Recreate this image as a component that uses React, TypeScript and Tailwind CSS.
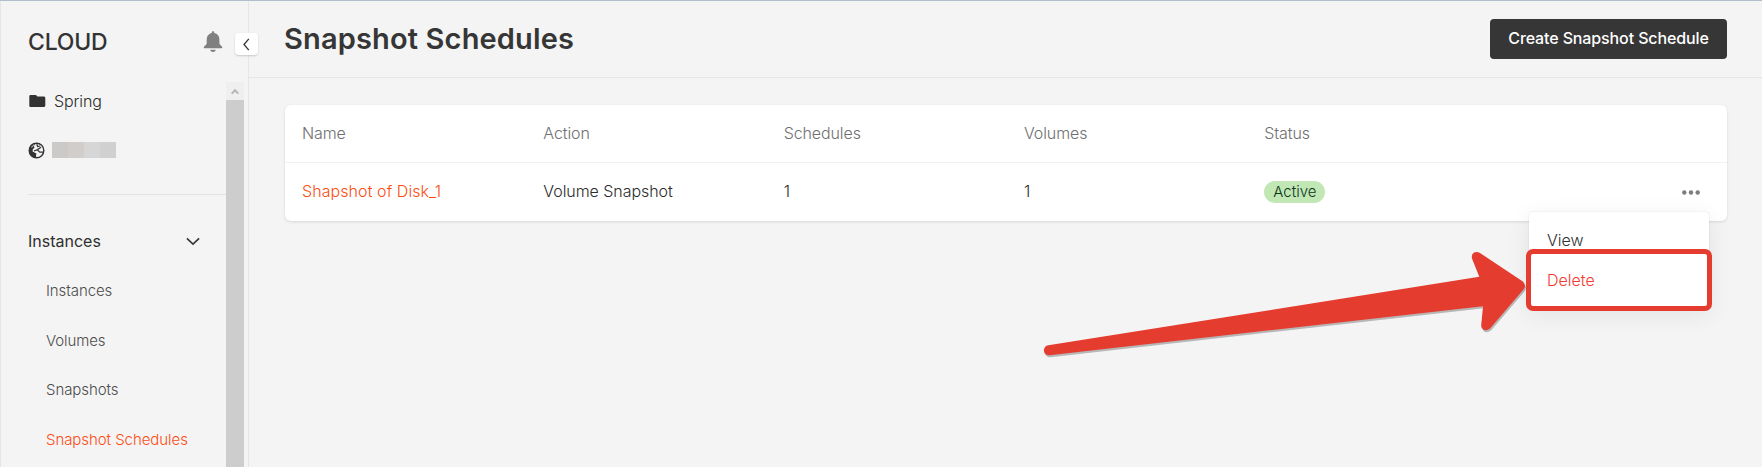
import React from "react";

const columns = ["Name", "Action", "Schedules", "Volumes", "Status", ""];
const links = ["Instances", "Volumes", "Snapshots", "Snapshot Schedules"];

function Sidebar() {
  return (
    <aside className="flex w-[249px] shrink-0 flex-col border-x border-[#e6e6e6]">
      <div className="flex h-[81px] items-center pt-[3px] pl-[27px]">
        <span className="w-[175px] text-[23px] leading-7 font-medium tracking-[-0.2px] text-[#333]">CLOUD</span>
        <svg width="20" height="22" viewBox="0 0 20 22" fill="#808080">
          <path d="M10 .2c.8 0 1.200.5 1.200 1.300v.6c3.300.6 5.200 3 5.200 6.400v3.600c0 1.200.8 2 2 2.800.7.5.9.9.9 1.600 0 .5-.3.800-.9.800H1.700c-.6 0-.9-.3-.9-.8 0-.7.2-1.100.9-1.600 1.200-.8 2-1.600 2-2.800V8.500c0-3.400 1.900-5.800 5.100-6.400v-.6C8.800.7 9.200.2 10 .2z" />
          <path d="M7.300 18.800h5.400c-.2 1.300-1.200 2.300-2.700 2.300s-2.500-1-2.700-2.300z" />
        </svg>
      </div>
      <div className="flex min-h-0 flex-1">
        <div className="flex w-[225px] flex-col pl-[27px]">
          <div className="flex h-[40px] items-center gap-[8px] pl-[1px] text-[#2b2b2b]">
            <svg width="17" height="14" viewBox="0 0 17 14" fill="#333">
              <path d="M1.500 1h4.900c.5 0 .8.200 1.100.5l.9 1h6.400c.8 0 1.500.7 1.500 1.500v7.500c0 .8-.7 1.500-1.500 1.500H1.500C.7 13 .3 12.300.3 11.500v-9C.3 1.700.7 1 1.500 1z" />
            </svg>
            <span className="text-[16px] font-[340] tracking-[-0.1px]">Spring</span>
          </div>
          <div className="mt-[9px] flex h-[40px] items-center gap-[7px]">
            <svg width="17" height="17" viewBox="0 0 17 17">
              <circle cx="8.500" cy="8.500" r="7.300" fill="none" stroke="#333" strokeWidth="1.400" />
              <path d="M3.500 3 5.500 1.800 7 2.600 5.700 4.300 6.600 5.400 4.800 7.200 4.600 9.500 6.500 10.500 8.600 11.800 8 13 8.300 15.500C4.200 15.600 1.400 13 1.300 8.500 1.200 6 2.200 4 3.500 3z" fill="#333" />
              <path d="M6 9 9.500 7.600 13 5.200M9.200 7.800l2.600 2.300 3.200.1M8.800 2.300l.8 2.200 2.500-.5" fill="none" stroke="#333" strokeWidth="1.200" />
              <path d="M3.300 5 4.800 4.500M4.800 3.400 6 3" stroke="#f4f4f4" strokeWidth=".9" />
            </svg>
            <div className="flex h-4">
              <i className="w-4 bg-[#cbcac9]" />
              <i className="w-4 bg-[#d0cdca]" />
              <i className="w-4 bg-[#d6d6d6]" />
              <i className="w-4 bg-[#d0d0d0]" />
            </div>
          </div>
          <div className="mt-[24px] h-px shrink-0 bg-[#e3e3e3]" />
          <div className="mt-[26px] flex h-10 shrink-0 items-center justify-between pr-[26px]">
            <span className="text-[16px] text-[#2f2f2f]">Instances</span>
            <svg width="14" height="9" viewBox="0 0 14 9" fill="none" stroke="#363636" strokeWidth="1.600">
              <path d="M.9 1.300 7 7.200l6.100-5.900" />
            </svg>
          </div>
          <nav className="flex flex-col pt-[5px] pl-[18px]">
            {links.map((l) => (
              <a
                key={l}
                className={
                  l === "Snapshot Schedules"
                    ? "flex h-[49.700px] shrink-0 items-center text-[15px] font-[340] tracking-[-0.06px] whitespace-nowrap text-[#fc4c14]"
                    : "flex h-[49.700px] shrink-0 items-center text-[15px] font-[340] tracking-[-0.08px] whitespace-nowrap text-[#4c4c4c]"
                }
              >
                {l}
              </a>
            ))}
          </nav>
        </div>
        <div className="mt-[1px] w-[18px] bg-[#cdcdcd]">
          <div className="flex h-[18px] items-center justify-center bg-[#efefef]">
            <svg width="8" height="7" viewBox="0 0 8 7" fill="none" stroke="#b5b5b5" strokeWidth="2">
              <path d="M.7 5.600 4 2.200l3.300 3.400" />
            </svg>
          </div>
        </div>
      </div>
    </aside>
  );
}

export default function App() {
  return (
    <div className="relative flex h-[467px] w-[1762px] overflow-hidden bg-[#f4f4f4] font-['Inter',sans-serif] leading-6">
      <Sidebar />
      <main className="flex min-w-0 flex-1 flex-col">
        <header className="flex h-[78px] items-center justify-between border-b border-[#e6e6e6] pr-[35px] pl-[35px]">
          <h1 className="text-[29px] leading-9 font-[590] tracking-[0.15px] text-[#363636]">Snapshot Schedules</h1>
          <button className="h-10 w-[237px] rounded bg-[#363636] pb-[2px] text-[16px] font-medium tracking-[-0.12px] whitespace-nowrap text-white">
            Create Snapshot Schedule
          </button>
        </header>
        <section className="mt-[27px] mr-[35px] ml-[36px] rounded-md bg-white text-[16px] font-[340] tracking-[-0.1px] shadow-[0_1px_3px_rgba(0,0,0,0.12)]">
          <div className="grid h-[58px] grid-cols-6 items-center border-b border-[#f1f1f1] pb-[2px] text-[#707070]">
            {columns.map((c, i) => (
              <span key={i} className={i === 0 ? "pl-[17px]" : "pl-[18px]"}>{c}</span>
            ))}
          </div>
          <div className="grid h-[58px] grid-cols-6 items-center text-[#2b2b2b]">
            <a className="pb-[2px] pl-[17px] tracking-[0.08px] text-[#fc4c14]">Shapshot of Disk_1</a>
            <span className="pb-[2px] pl-[18px] tracking-[-0.06px]">Volume Snapshot</span>
            <span className="pb-[2px] pl-[18px]">1</span>
            <span className="pb-[2px] pl-[18px]">1</span>
            <span className="flex pl-[18px]">
              <span className="flex h-[22px] w-[61px] items-center justify-center rounded-full bg-[#c0e7b4] text-[15px] tracking-[0px] text-[#0d3319]">
                Active
              </span>
            </span>
            <span className="flex justify-end pr-[27px]">
              <svg width="18" height="5" viewBox="0 0 18 5" fill="#7d7d7d">
                <circle cx="2.300" cy="2.500" r="2.200" />
                <circle cx="9" cy="2.500" r="2.200" />
                <circle cx="15.700" cy="2.500" r="2.200" />
              </svg>
            </span>
          </div>
        </section>
      </main>

      <div className="absolute top-0 left-0 h-px w-full bg-[#b0bdca]" />
      <button className="absolute top-[33px] left-[235px] flex h-[22px] w-[23px] items-center justify-center rounded bg-white shadow-[0_1px_2px_rgba(0,0,0,0.18)]">
        <svg width="7" height="13" viewBox="0 0 7 13" fill="none" stroke="#333" strokeWidth="1.300">
          <path d="M5.800.8 1 6.500l4.800 5.700" />
        </svg>
      </button>

      <div className="absolute top-[212px] left-[1529px] flex h-[96px] w-[180px] flex-col rounded bg-white pt-2 pl-[18px] text-[16px] font-[340] shadow-[0_6px_24px_rgba(0,0,0,0.08),0_0_2px_rgba(0,0,0,0.12)]">
        <span className="flex h-10 items-center text-[#2f2f2f]">View</span>
        <span className="flex h-10 items-center text-[#f23a32]">Delete</span>
      </div>
      <div className="absolute top-[249px] left-[1526px] h-[62px] w-[186px] rounded-[7px] border-[5px] border-[#e53c30]" />
      <svg
        className="absolute top-[240px] left-[1030px] drop-shadow-[1px_2px_0.5px_rgba(0,0,0,0.25)]"
        width="500"
        height="130"
        viewBox="1030 240 500 130"
      >
        <path
          d="M1048.300 345.300 1479.300 276.700 1472 258.500Q1471 254.500 1474 252.600 1477 251 1480 253L1522.500 281.300Q1527 285 1523.500 289.500L1490 328.500Q1487 331 1484 330 1481 328.600 1481.200 325.500L1483 306.200 1049.500 355.300A5 5 0 0 1 1048.300 345.300Z"
          fill="#e53c30"
        />
      </svg>
    </div>
  );
}
